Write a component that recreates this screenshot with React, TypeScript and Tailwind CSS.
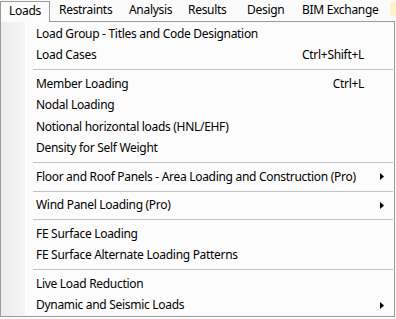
import React from 'react';

type Entry =
  | { kind: 'item'; label: string; shortcut?: string; sub?: boolean }
  | { kind: 'sep' };

const topMenu = [
  { label: 'Loads', w: 'w-[50px]' },
  { label: 'Restraints', w: 'w-[70px]' },
  { label: 'Analysis', w: 'w-[59px]' },
  { label: 'Results', w: 'w-[59px]' },
  { label: 'Design', w: 'w-[55px]' },
  { label: 'BIM Exchange', w: 'w-[93px]' },
];

const entries: Entry[] = [
  { kind: 'item', label: 'Load Group - Titles and Code Designation' },
  { kind: 'item', label: 'Load Cases', shortcut: 'Ctrl+Shift+L' },
  { kind: 'sep' },
  { kind: 'item', label: 'Member Loading', shortcut: 'Ctrl+L' },
  { kind: 'item', label: 'Nodal Loading' },
  { kind: 'item', label: 'Notional horizontal loads (HNL/EHF)' },
  { kind: 'item', label: 'Density for Self Weight' },
  { kind: 'sep' },
  { kind: 'item', label: 'Floor and Roof Panels - Area Loading and Construction (Pro)', sub: true },
  { kind: 'sep' },
  { kind: 'item', label: 'Wind Panel Loading (Pro)', sub: true },
  { kind: 'sep' },
  { kind: 'item', label: 'FE Surface Loading' },
  { kind: 'item', label: 'FE Surface Alternate Loading Patterns' },
  { kind: 'sep' },
  { kind: 'item', label: 'Live Load Reduction' },
  { kind: 'item', label: 'Dynamic and Seismic Loads', sub: true },
];

const Arrow = () => (
  <svg width="4" height="7" viewBox="0 0 4 7" className="absolute right-[10px] top-[7px]">
    <polygon points="0,0 4,3.5 0,7" fill="#000" />
  </svg>
);

export default function App() {
  return (
    <div
      className="relative w-[396px] h-[319px] overflow-hidden bg-white text-[12px] tracking-[-0.3px] text-black"
      style={{ fontFamily: '"Noto Sans", "Open Sans", sans-serif' }}
    >
      {/* menu bar */}
      <div className="flex h-[21px] bg-[#fbfbfb]">
        {topMenu.map((m, i) =>
          i === 0 ? (
            <div
              key={m.label}
              className={`${m.w} relative z-10 mt-[1px] h-[21px] border-l border-t border-r border-[#9a9a9a] bg-[#fcfcfc] pl-[8px] leading-[18px]`}
            >
              {m.label}
            </div>
          ) : (
            <div key={m.label} className={`${m.w} shrink-0 pl-[9px] leading-[20px]`}>
              {m.label}
            </div>
          )
        )}
        <div className="ml-auto mt-[2px] h-[14px] w-[6px] bg-[#fdf3c8]" />
      </div>

      {/* dropdown */}
      <div className="relative flex w-[395px] h-[296px] border border-[#9a9a9a] bg-[#fcfcfc]">
        <div className="w-[24px] shrink-0 bg-gradient-to-r from-[#ececec] to-[#f5f5f5]" />
        <div className="flex-1 flex flex-col pt-[1px]">
          {entries.map((e, i) =>
            e.kind === 'sep' ? (
              <div key={i} className="h-[7px] flex items-center pl-[8px] pr-[1px]">
                <div className="h-px w-full bg-[#c4c4c4]" />
              </div>
            ) : (
              <div key={i} className="relative h-[21.5px] flex items-center pl-[11px] pr-[30px] leading-[16px]">
                <span className="flex-1 whitespace-nowrap">{e.label}</span>
                {e.shortcut && <span className="whitespace-nowrap">{e.shortcut}</span>}
                {e.sub && <Arrow />}
              </div>
            )
          )}
        </div>
      </div>
    </div>
  );
}
